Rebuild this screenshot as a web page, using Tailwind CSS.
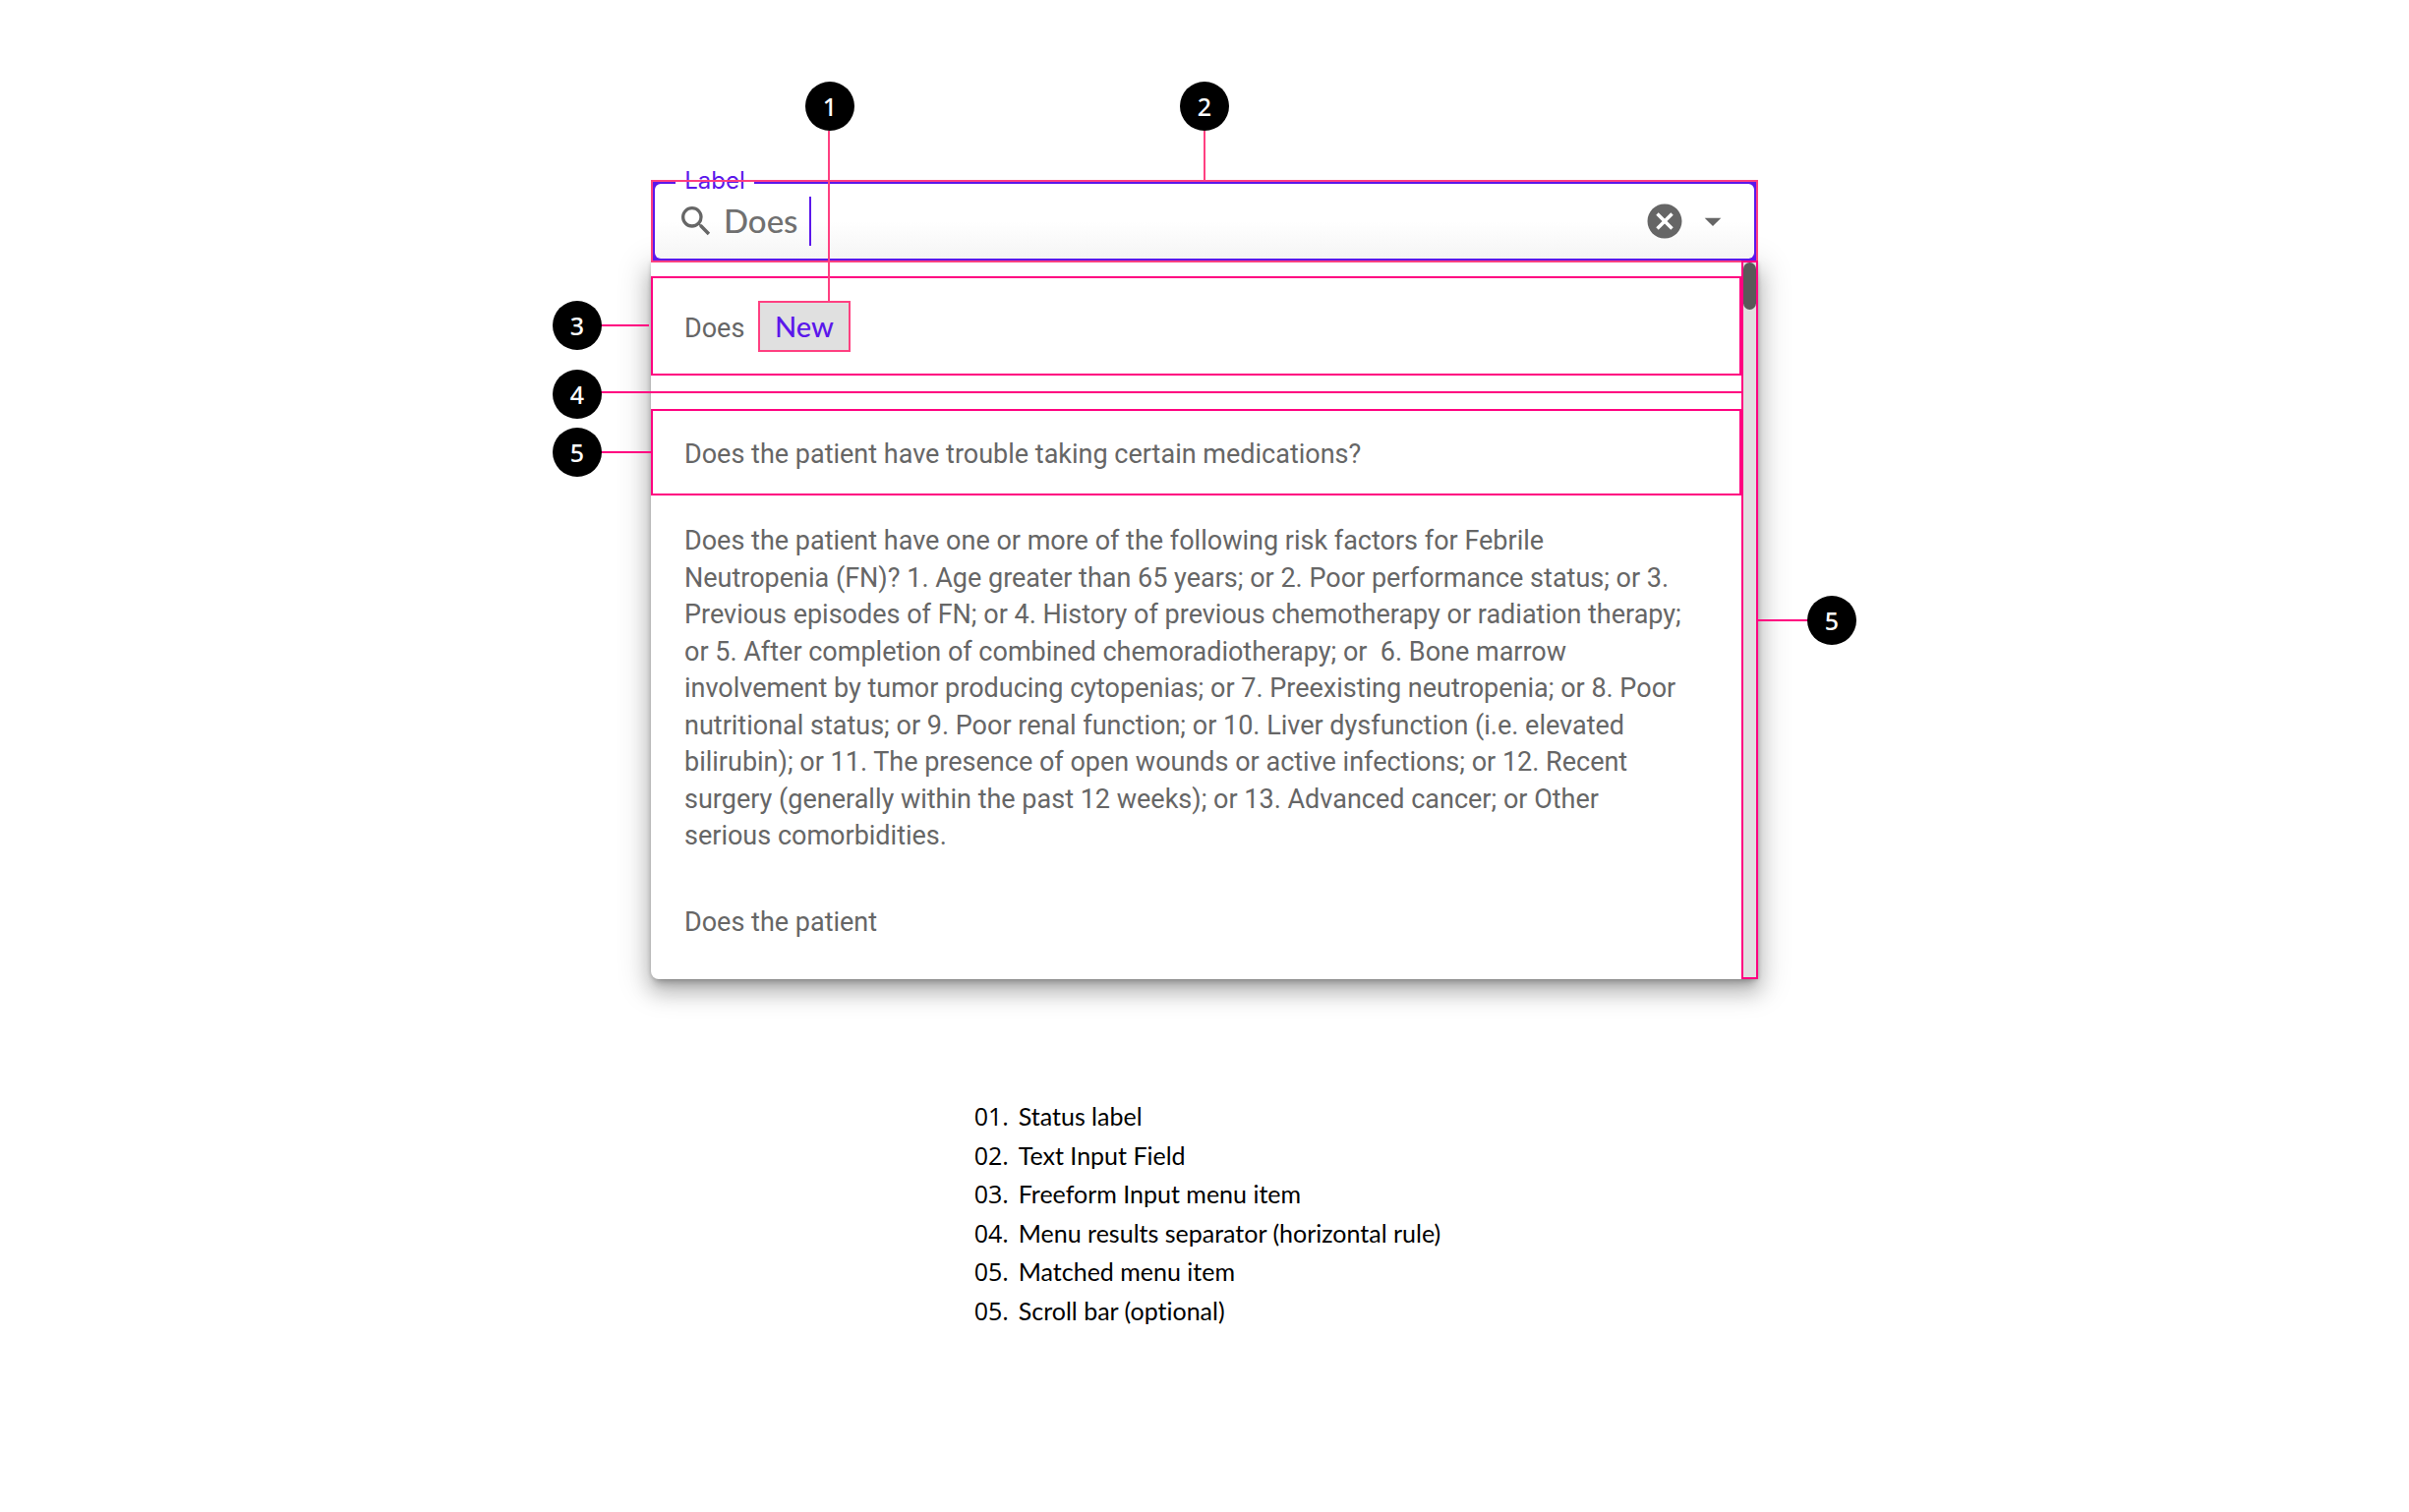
<!DOCTYPE html>
<html lang="en">
<head>
<meta charset="utf-8">
<title>Autocomplete anatomy</title>
<script src="https://cdn.jsdelivr.net/npm/@tailwindcss/browser@4"></script>
</head>
<body class="bg-white font-['Lato',sans-serif] text-black">
<main class="flex flex-col items-center px-40 pt-[183px] pb-40">

  <section class="relative w-full max-w-[1126px]" aria-label="Autocomplete">

    <!-- Text input field -->
    <div class="relative z-10 bg-[#5b17eb] p-1">
      <div class="flex h-[76px] items-center rounded-md bg-linear-to-b from-white from-50% to-[#f5f5f5] px-[22px] text-[#666666]">
        <svg class="size-10 shrink-0" viewBox="0 0 24 24" fill="currentColor" aria-hidden="true"><path d="M15.5 14h-.79l-.28-.27A6.47 6.47 0 0 0 16 9.5 6.5 6.5 0 1 0 9.5 16c1.61 0 3.09-.59 4.23-1.57l.27.28v.79l5 4.99L20.49 19l-4.99-5zm-6 0C7.01 14 5 11.99 5 9.5S7.01 5 9.5 5 14 7.01 14 9.5 11.99 14 9.5 14z"/></svg>
        <input id="question" type="text" value="Does" class="ml-2 w-[87px] bg-transparent text-[33px] font-medium text-[#707070] outline-none">
        <span class="h-[50px] w-0.5 bg-[#5b17eb]"></span>
        <button type="button" aria-label="Clear" class="ml-auto">
          <svg class="block size-[42px]" viewBox="0 0 24 24" fill="currentColor"><path d="M12 2C6.47 2 2 6.47 2 12s4.47 10 10 10 10-4.47 10-10S17.53 2 12 2zm5 13.59L15.59 17 12 13.41 8.41 17 7 15.59 10.59 12 7 8.41 8.41 7 12 10.59 15.59 7 17 8.41 13.41 12 17 15.59z"/></svg>
        </button>
        <button type="button" aria-label="Open menu" class="ml-2">
          <svg class="block size-10" viewBox="0 0 24 24" fill="currentColor"><path d="M7 10l5 5 5-5z"/></svg>
        </button>
      </div>
      <label for="question" class="absolute -top-4 left-[25px] w-20 bg-white text-center font-['Inter',sans-serif] text-2xl leading-[34px] text-[#5b17eb]">Label</label>
      <span class="pointer-events-none absolute inset-0 border-2 border-[#ff4081]"></span>
    </div>

    <!-- Results menu -->
    <div class="flex rounded-bl-lg bg-white font-['Roboto',sans-serif] text-[27px] leading-[1.39] text-[#666666] shadow-[0_8px_8px_-4px_rgba(0,0,0,0.22),0_12px_20px_2px_rgba(0,0,0,0.18),0_6px_32px_6px_rgba(0,0,0,0.14),0_0_4px_0_rgba(0,0,0,0.2)]">
      <ul class="min-w-0 flex-1 pt-3.5 pb-3.5" role="listbox" aria-label="Results">
        <li role="option" class="flex h-[101px] items-center border-2 border-[#ff0080] pl-8">
          <span class="w-[75px] pt-1.5">Does</span>
          <span class="border-2 border-[#ff4081] bg-[#e0e0e0] px-[15px] font-['Lato',sans-serif] text-[29px] leading-[48px] font-medium text-[#5b17eb]">New</span>
        </li>
        <li role="separator" class="my-4 border-t-2 border-[#ff0080]"></li>
        <li role="option" class="flex h-[88px] items-center border-2 border-[#ff0080] px-8 pt-1.5">Does the patient have trouble taking certain medications?</li>
        <li role="option" class="pt-7 pr-[57px] pb-[25px] pl-[34px]">Does the patient have one or more of the following risk factors for Febrile Neutropenia (FN)? 1. Age greater than 65 years; or 2. Poor performance status; or 3. Previous episodes of FN; or 4. History of previous chemotherapy or radiation therapy; or 5. After completion of combined chemoradiotherapy; or&nbsp; 6. Bone marrow involvement by tumor producing cytopenias; or 7. Preexisting neutropenia; or 8. Poor nutritional status; or 9. Poor renal function; or 10. Liver dysfunction (i.e. elevated bilirubin); or 11. The presence of open wounds or active infections; or 12. Recent surgery (generally within the past 12 weeks); or 13. Advanced cancer; or Other serious comorbidities.</li>
        <li role="option" class="px-[34px] py-[25px]">Does the patient</li>
      </ul>
      <div class="relative z-20 -mt-0.5 w-[17px] border-2 border-[#ff0080] bg-[#e0e0e0]">
        <div class="h-12 rounded-full bg-[#595959]"></div>
      </div>
    </div>

    <!-- Callouts pinned on the diagram -->
    <div class="font-['Noto_Sans',sans-serif] text-[25px] leading-[50px] font-medium text-white">
      <span class="absolute -top-[50px] left-[180px] z-30 h-[174px] w-0.5 bg-[#ff4081]"></span>
      <span class="absolute -top-[100px] left-[157px] z-30 size-[50px] rounded-full bg-black text-center">1</span>
      <span class="absolute -top-[50px] left-1/2 z-30 h-[50px] w-0.5 -translate-x-1/2 bg-[#ff4081]"></span>
      <span class="absolute -top-[100px] left-1/2 z-30 size-[50px] -translate-x-1/2 rounded-full bg-black text-center">2</span>
      <span class="absolute top-[147px] -left-[52px] h-0.5 w-[50px] bg-[#ff0080]"></span>
      <span class="absolute top-[123px] -left-[100px] size-[50px] rounded-full bg-black text-center">3</span>
      <span class="absolute top-[215px] -left-[52px] h-0.5 w-[52px] bg-[#ff0080]"></span>
      <span class="absolute top-[193px] -left-[100px] size-[50px] rounded-full bg-black text-center">4</span>
      <span class="absolute top-[276px] -left-[52px] h-0.5 w-[52px] bg-[#ff0080]"></span>
      <span class="absolute top-[252px] -left-[100px] size-[50px] rounded-full bg-black text-center">5</span>
      <span class="absolute top-[447px] -right-[51px] h-0.5 w-[51px] bg-[#ff0080]"></span>
      <span class="absolute top-[423px] -right-[100px] size-[50px] rounded-full bg-black text-center">5</span>
    </div>
  </section>

  <!-- Legend -->
  <dl class="mt-[120px] grid grid-cols-[45px_auto] pl-1.5 text-[25px] leading-[1.58] [font-variant-ligatures:none]">
    <dt class="font-['Open_Sans',sans-serif]">01.</dt><dd>Status label</dd>
    <dt class="font-['Open_Sans',sans-serif]">02.</dt><dd>Text Input Field</dd>
    <dt class="font-['Open_Sans',sans-serif]">03.</dt><dd>Freeform Input menu item</dd>
    <dt class="font-['Open_Sans',sans-serif]">04.</dt><dd>Menu results separator (horizontal rule)</dd>
    <dt class="font-['Open_Sans',sans-serif]">05.</dt><dd>Matched menu item</dd>
    <dt class="font-['Open_Sans',sans-serif]">05.</dt><dd>Scroll bar (optional)</dd>
  </dl>
</main>
</body>
</html>
